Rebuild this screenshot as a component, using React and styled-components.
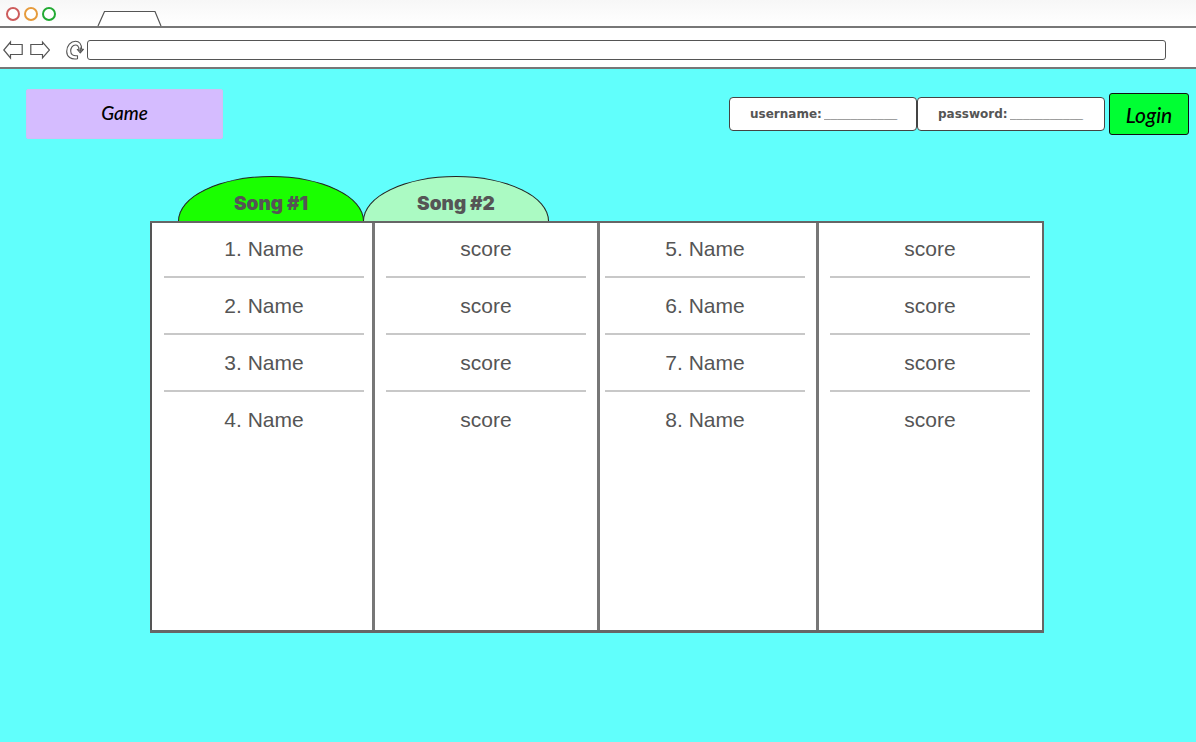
import React from "react";
import styled, { createGlobalStyle } from "styled-components";

const GlobalStyle = createGlobalStyle`
  * { box-sizing: border-box; }
  body {
    margin: 0;
    background: #61fffc;
    color: #555;
    font-family: "Liberation Sans", Arial, sans-serif;
  }
  button, input { font: inherit; color: inherit; }
`;

const TabStrip = styled.div`
  display: flex;
  align-items: center;
  height: 28px;
  padding-left: 6px;
  border-bottom: 2px solid #777;
  background: linear-gradient(#f7f7f7, #fff);
`;

const WindowButton = styled.button`
  width: 14px;
  height: 14px;
  margin: 2px 4px 0 0;
  padding: 0;
  border: 2px solid ${(p) => p.$color};
  border-radius: 50%;
  background: #fff;
`;

const BrowserTab = styled.svg`
  display: block;
  align-self: flex-end;
  width: 66px;
  height: 16px;
  margin-left: 37px;
`;

const Toolbar = styled.div`
  display: flex;
  align-items: center;
  height: 41px;
  padding: 5px 30px 0 3px;
  border-bottom: 2px solid #777;
  background: #fff;
`;

const IconButton = styled.button`
  display: block;
  height: 20px;
  margin-right: ${(p) => p.$gap}px;
  padding: 0;
  border: 0;
  background: none;
  svg { display: block; }
`;

const AddressBar = styled.input`
  flex: 1;
  min-width: 0;
  height: 20px;
  padding: 0 8px;
  border: 1px solid #555;
  border-radius: 3px;
  background: #fff;
`;

const Header = styled.header`
  display: flex;
  align-items: flex-start;
  justify-content: space-between;
  padding: 20px 7px 0 26px;
`;

const GameButton = styled.button`
  width: 197px;
  height: 50px;
  padding: 0 0 4px;
  border: 1px solid #d0bff5;
  border-radius: 2px;
  background: #d5bcff;
  color: #000;
  font: italic 500 19px Lato, cursive;
`;

const LoginForm = styled.form`
  display: flex;
  align-items: center;
  padding-top: 4px;
`;

const Field = styled.label`
  display: flex;
  align-items: center;
  gap: 2px;
  width: 188px;
  height: 34px;
  padding-left: 20px;
  border: 1px solid #444;
  border-radius: 4px;
  background: #fff;
  font: 700 12px "DejaVu Sans", sans-serif;
`;

const FieldInput = styled.input`
  width: 76px;
  padding: 0;
  border: 0;
  background: none;
  font: 700 12px "Liberation Sans", sans-serif;
  &::placeholder { color: #555; opacity: 1; }
`;

const LoginButton = styled.button`
  width: 80px;
  height: 42px;
  margin-left: 4px;
  padding: 0;
  border: 1px solid #111;
  border-radius: 3px;
  background: #00ff33;
  color: #000;
  font: italic 500 21px Lato, cursive;
`;

const Board = styled.main`
  padding: 37px 152px 0 150px;
`;

const SongTabs = styled.div`
  display: flex;
  padding-left: 28px;
`;

const SongTab = styled.button`
  width: 186px;
  height: 45px;
  margin-right: -1px;
  padding: 8px 0 0;
  border: 1px solid #222;
  border-bottom: 0;
  border-radius: 50% 50% 0 0 / 100% 100% 0 0;
  background: ${(p) => (p.$active ? "#1aff00" : "#abfac3")};
  font: 900 19px Inter, sans-serif;
`;

const ScoreTable = styled.table`
  width: 100%;
  table-layout: fixed;
  border-spacing: 0;
  border: solid #666;
  border-width: 2px 2px 3px 0;
  background: #fff;
  font-size: 21px;
  line-height: 24px;
  text-align: center;
`;

const Column = styled.col`
  width: ${(p) => p.$width}px;
`;

const Cell = styled.td`
  padding: 0 ${(p) => p.$right}px 0 ${(p) => p.$left}px;
  border-left: ${(p) => (p.$outer ? 2 : 3)}px solid ${(p) => (p.$outer ? "#555" : "#777")};
  vertical-align: top;
`;

const Entry = styled.div`
  height: ${(p) => (p.$last ? 238 : p.$first ? 55 : 57)}px;
  padding-top: ${(p) => (p.$first ? 14 : 16)}px;
  border-bottom: ${(p) => (p.$last ? 0 : 2)}px solid #c8c8c8;
`;

const columns = [
  { width: 222, left: 12, right: 8, values: ["1. Name", "2. Name", "3. Name", "4. Name"] },
  { width: 225, left: 11, right: 11, values: ["score", "score", "score", "score"] },
  { width: 219, left: 5, right: 11, values: ["5. Name", "6. Name", "7. Name", "8. Name"] },
  { width: 226, left: 11, right: 12, values: ["score", "score", "score", "score"] },
];

const ArrowIcon = ({ forward }) => (
  <svg width="20" height="20" viewBox="0 0 20 20" fill="#fff" stroke="#555" strokeWidth="1.2">
    <path d={forward ? "M.8 4.500H12.500V2l7 8-7 8v-3.500H.8z" : "M19.200 4.500H7.500V2L.8 10l6.700 8v-3.500h11.700z"} />
  </svg>
);

const ReloadIcon = () => (
  <svg width="18" height="20" viewBox="0 0 18 20" fill="#fff" stroke="#555" strokeWidth="1.1" strokeLinejoin="round">
    <path d="M11.500 18.700C5 20 .7 16.500.7 11.500C.7 5.500 4.800 1.200 9.500 1.200c4 0 6 3.300 6.100 8h1.900l-3.200 3.800-3-3.500 1.600-.3C12.800 6.500 11.600 5 9.500 5 6.500 5 4.700 8 4.700 11c0 3.500 2.500 5.300 6.800 4.700z" />
    <path d="M12 10.200h5M14.300 7.500v5" />
  </svg>
);

export default function App() {
  return (
    <>
      <GlobalStyle />
      <TabStrip>
        <WindowButton $color="#cd5c5c" aria-label="Close" />
        <WindowButton $color="#e69b3c" aria-label="Minimize" />
        <WindowButton $color="#22aa33" aria-label="Maximize" />
        <BrowserTab viewBox="0 0 66 16" fill="#fff" stroke="#555" strokeWidth="1.2">
          <path d="M1 16L7.500 1.500H58L64 16" />
        </BrowserTab>
      </TabStrip>
      <Toolbar>
        <IconButton $gap={7} aria-label="Back"><ArrowIcon /></IconButton>
        <IconButton $gap={16} aria-label="Forward"><ArrowIcon forward /></IconButton>
        <IconButton $gap={3} aria-label="Reload"><ReloadIcon /></IconButton>
        <AddressBar type="text" aria-label="Address" />
      </Toolbar>
      <Header>
        <GameButton>Game</GameButton>
        <LoginForm onSubmit={(e) => e.preventDefault()}>
          <Field>
            username:
            <FieldInput type="text" placeholder="___________" />
          </Field>
          <Field>
            password:
            <FieldInput type="password" placeholder="___________" />
          </Field>
          <LoginButton>Login</LoginButton>
        </LoginForm>
      </Header>
      <Board>
        <SongTabs>
          <SongTab $active>Song #1</SongTab>
          <SongTab>Song #2</SongTab>
        </SongTabs>
        <ScoreTable>
          <colgroup>
            {columns.map((c, i) => <Column key={i} $width={c.width} />)}
          </colgroup>
          <tbody>
            {[0, 1, 2, 3].map((row) => (
              <tr key={row}>
                {columns.map((c, i) => (
                  <Cell key={i} $left={c.left} $right={c.right} $outer={i === 0}>
                    <Entry $first={row === 0} $last={row === 3}>{c.values[row]}</Entry>
                  </Cell>
                ))}
              </tr>
            ))}
          </tbody>
        </ScoreTable>
      </Board>
    </>
  );
}
